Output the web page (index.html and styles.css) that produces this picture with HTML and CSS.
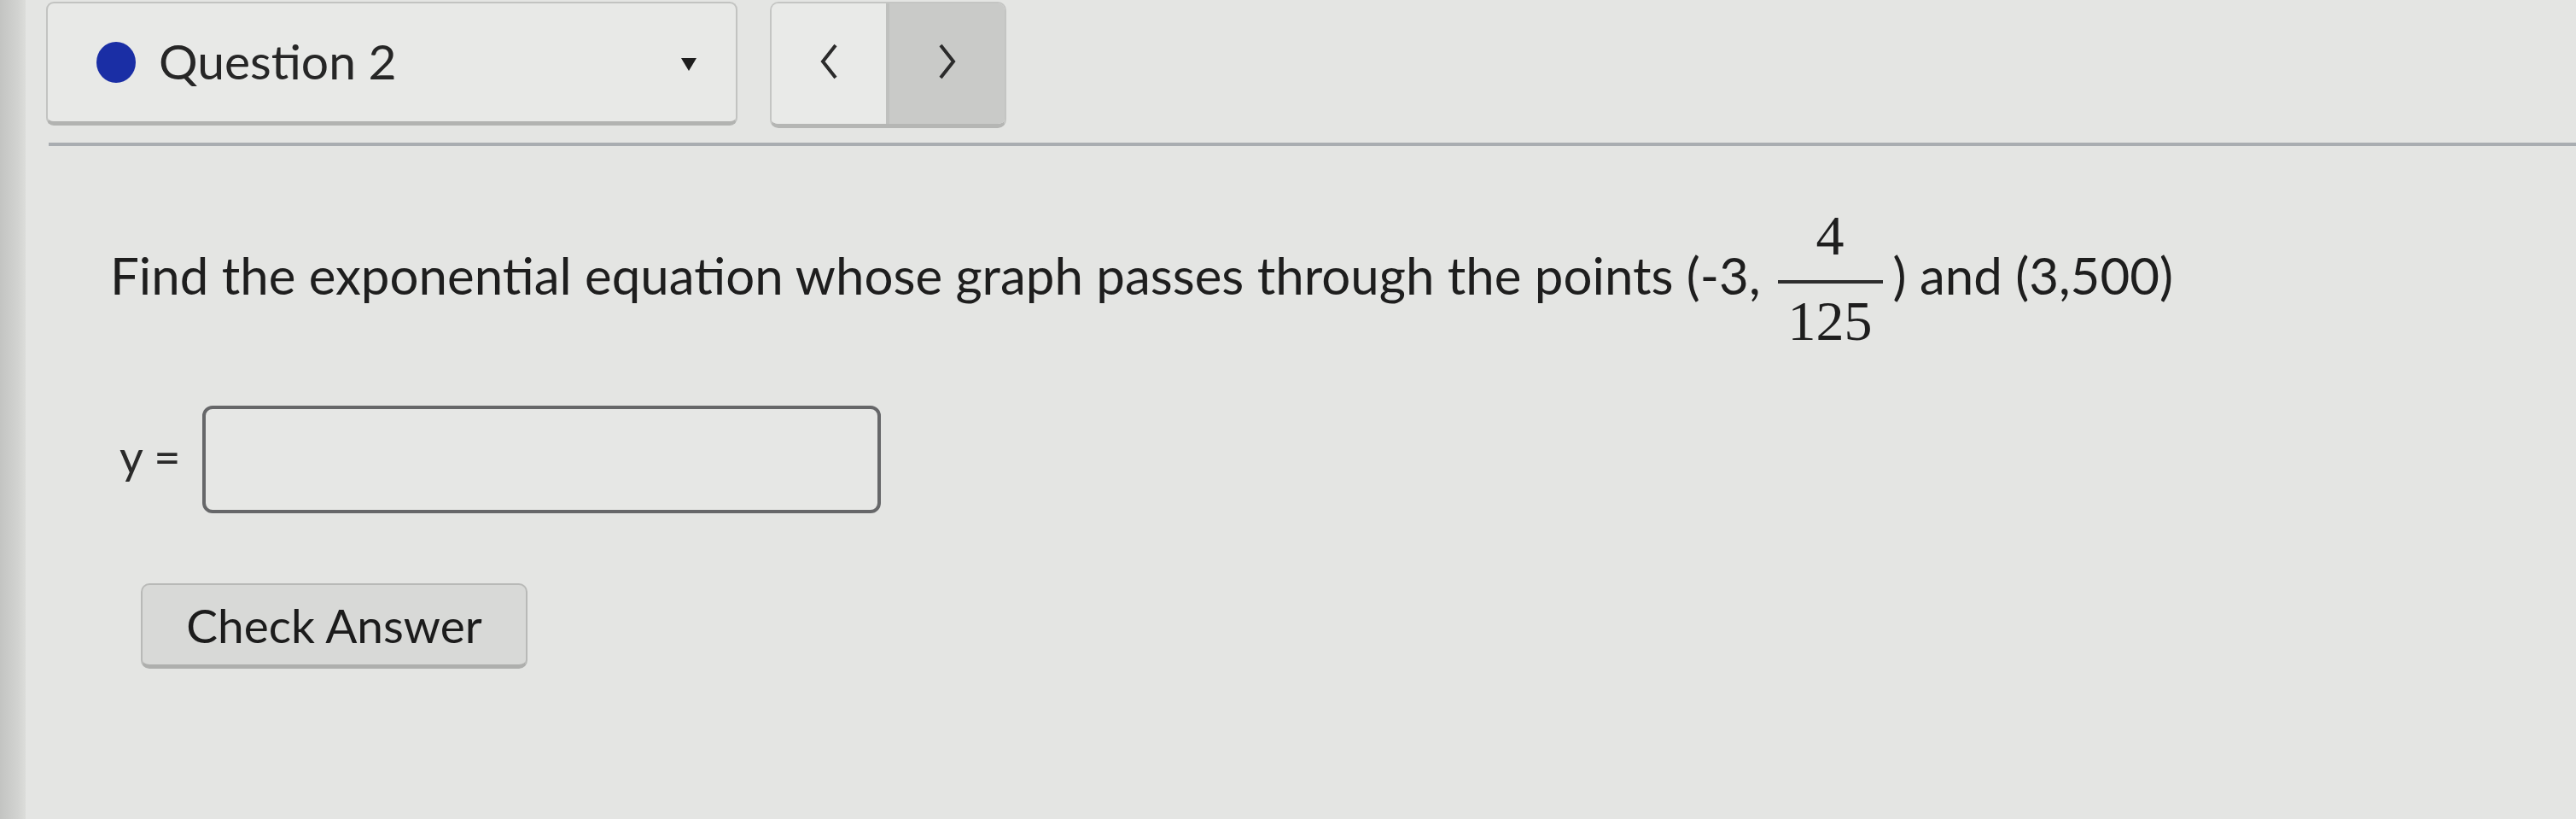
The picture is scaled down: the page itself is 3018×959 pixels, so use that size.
FILE: index.html
```html
<!DOCTYPE html>
<html>
<head>
<meta charset="utf-8">
<link rel="stylesheet" href="styles.css">
</head>
<body>
<div class="page">
  <div class="edge"></div>
  <div class="main">
    <div class="header">
      <div class="qselect">
        <span class="dot"></span>
        <span class="qlabel">Question 2</span>
        <svg class="caret" viewBox="0 0 20 18" width="20" height="18"><path d="M1 2 L19 2 L10 17 Z" fill="#1e1e1e"/></svg>
      </div>
      <div class="nav">
        <div class="nav-btn prev">
          <svg viewBox="0 0 24 44" width="24" height="44"><path d="M20 3 L5 22 L20 41" fill="none" stroke="#2b2b2b" stroke-width="4" stroke-linejoin="miter"/></svg>
        </div>
        <div class="nav-btn next">
          <svg viewBox="0 0 24 44" width="24" height="44"><path d="M4 3 L19 22 L4 41" fill="none" stroke="#2b2b2b" stroke-width="4" stroke-linejoin="miter"/></svg>
        </div>
      </div>
    </div>
    <div class="rule"></div>
    <p class="question">Find the exponential equation whose graph passes through the points (-3,<span class="frac"><span class="num">4</span><span class="den">125</span></span>) and (3,500)</p>
    <div class="answer">
      <span class="ylabel">y =</span>
      <div class="input"></div>
    </div>
    <div class="check">Check Answer</div>
  </div>
</div>
</body>
</html>
```
FILE: styles.css
```css
html, body {
  margin: 0;
  padding: 0;
}
body {
  width: 3018px;
  height: 959px;
  overflow: hidden;
  background: #e4e5e3;
  font-family: Lato, "Open Sans", "Liberation Sans", sans-serif;
  color: #222;
}
.page {
  display: flex;
  height: 959px;
}
.edge {
  width: 30px;
  flex: none;
  background: linear-gradient(to right, #c3c4c2, #d2d3d1 70%, #dcddda);
}
.main {
  flex: 1;
  padding-top: 2px;
}
.header {
  display: flex;
  align-items: flex-start;
  gap: 38px;
  margin-left: 24px;
}
.qselect {
  width: 810px;
  height: 145px;
  box-sizing: border-box;
  border: 2px solid #c2c3c1;
  border-bottom: 5px solid #b2b3b1;
  border-radius: 9px;
  background: #e8e9e7;
  display: flex;
  align-items: center;
  padding-left: 57px;
  padding-right: 45px;
}
.dot {
  width: 46px;
  height: 48px;
  border-radius: 50%;
  background: #1a2ea5;
  flex: none;
  margin-right: 27px;
}
.qlabel {
  font-size: 57px;
  color: #262626;
  flex: 1;
  padding-bottom: 4px;
}
.caret {
  flex: none;
  margin-top: 4px;
}
.nav {
  width: 277px;
  height: 148px;
  box-sizing: border-box;
  border: 2px solid #c4c5c3;
  border-bottom: 5px solid #b5b6b4;
  border-radius: 10px;
  display: flex;
  overflow: hidden;
}
.nav-btn {
  display: flex;
  align-items: center;
  justify-content: center;
  padding-bottom: 6px;
}
.prev {
  width: 134px;
  background: #e9eae8;
  border-right: 4px solid #bfc0be;
}
.next {
  flex: 1;
  background: #c9cac8;
}
.rule {
  height: 4px;
  background: #a9adb1;
  margin-left: 27px;
  margin-top: 17px;
}
.question {
  margin: 72px 0 0 99px;
  font-size: 60px;
  line-height: 1.2;
  color: #1e1e1e;
  white-space: nowrap;
}
.frac {
  display: inline-block;
  vertical-align: middle;
  text-align: center;
  font-family: "Liberation Serif", serif;
  font-size: 66px;
  line-height: 1;
  margin: 0 12px 0 20px;
}
.num {
  display: block;
  padding-bottom: 19px;
}
.den {
  display: block;
  border-top: 4px solid #2e2e2e;
  padding: 11px 12px 8px;
}
.answer {
  display: flex;
  align-items: center;
  margin-top: 58px;
  margin-left: 110px;
}
.ylabel {
  font-size: 54px;
  color: #2a2a2a;
  width: 97px;
  padding-bottom: 8px;
}
.input {
  width: 795px;
  height: 126px;
  box-sizing: border-box;
  border: 4px solid #666769;
  border-radius: 12px;
  background: #e6e7e5;
}
.check {
  margin-left: 135px;
  margin-top: 82px;
  width: 453px;
  height: 100px;
  box-sizing: border-box;
  border: 2px solid #b8b9b7;
  border-bottom: 5px solid #aeafad;
  border-radius: 10px;
  background: #d8d9d7;
  display: flex;
  align-items: center;
  justify-content: center;
  font-size: 55px;
  color: #1c1c1c;
}
```
